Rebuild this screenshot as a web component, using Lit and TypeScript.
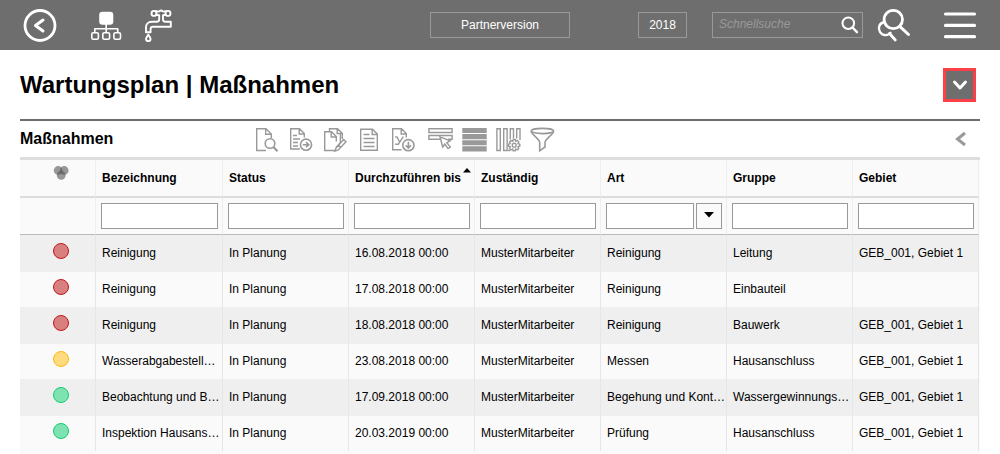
import { LitElement, html, svg, css } from "lit";
import { customElement } from "lit/decorators.js";

type Level = "red" | "yellow" | "green";

interface Measure {
  level: Level;
  cells: string[];
}

const COLUMNS = [
  "Bezeichnung",
  "Status",
  "Durchzuführen bis",
  "Zuständig",
  "Art",
  "Gruppe",
  "Gebiet",
];
const SORTED = "Durchzuführen bis";
const WITH_LIST = "Art";

const LEVEL_NAMES: Record<Level, string> = {
  red: "Rot",
  yellow: "Gelb",
  green: "Grün",
};

const ROWS: Measure[] = [
  { level: "red", cells: ["Reinigung", "In Planung", "16.08.2018 00:00", "MusterMitarbeiter", "Reinigung", "Leitung", "GEB_001, Gebiet 1"] },
  { level: "red", cells: ["Reinigung", "In Planung", "17.08.2018 00:00", "MusterMitarbeiter", "Reinigung", "Einbauteil", ""] },
  { level: "red", cells: ["Reinigung", "In Planung", "18.08.2018 00:00", "MusterMitarbeiter", "Reinigung", "Bauwerk", "GEB_001, Gebiet 1"] },
  { level: "yellow", cells: ["Wasserabgabestell…", "In Planung", "23.08.2018 00:00", "MusterMitarbeiter", "Messen", "Hausanschluss", "GEB_001, Gebiet 1"] },
  { level: "green", cells: ["Beobachtung und B…", "In Planung", "17.09.2018 00:00", "MusterMitarbeiter", "Begehung und Kont…", "Wassergewinnungs…", "GEB_001, Gebiet 1"] },
  { level: "green", cells: ["Inspektion Hausans…", "In Planung", "20.03.2019 00:00", "MusterMitarbeiter", "Prüfung", "Hausanschluss", "GEB_001, Gebiet 1"] },
];

const DOCUMENT_TOOLS = [
  {
    label: "Vorschau",
    art: svg`<path d="M12 23.5H2.7V1.7H12L17.3 7V11M11.7 2V7.3H17"/>
      <circle cx="16" cy="16.5" r="4.8" stroke-width="1.6"/><path d="M19.4 20L23.5 24.2" stroke-width="2.2"/>`,
  },
  {
    label: "Weiterleiten",
    art: svg`<path d="M12 22H2.7V1.7H11.5L16.3 6.5V10.5M11.2 2V7H16M5 8.5H9M5 12H12M5 15.5H10M5 19H10"/>
      <circle cx="18" cy="17.7" r="5.6" stroke-width="1.6"/><path d="M14.8 17.7H20M18 15.2L20.8 17.7L18 20.2" stroke-width="1.6"/>`,
  },
  {
    label: "Bearbeiten",
    art: svg`<path d="M7.5 4.5V1.7H15.5L20.3 6.3V12M15.2 2V6.5H20M13 23.5H2.7V4.7H9.5L14.3 9.5V14.5M9.2 5V10H14M14 21L21.6 12.6L24 14.8L16.3 23L12.8 24.2L14 21ZM16.5 18.2L19 20.5"/>
      <path d="M18.4 7V15.6L14 20.5" />`,
  },
  {
    label: "Liste",
    art: svg`<path d="M4.7 2.2H16.5L21.3 7V23.3H4.7ZM16.2 2.5V7.5H21M7.5 7.5H13.5M7.5 11.5H18.5M7.5 15.5H18.5M7.5 19.5H18.5"/>`,
  },
  {
    label: "Export",
    art: svg`<path d="M11.5 22.7H2.7V1.7H11.5L16.3 6.5V10.5M11.2 2V7H16M5.2 10H7L9.5 15M13.3 9.7L8.3 17.3H5.2"/>
      <circle cx="18.4" cy="18.2" r="5.6" stroke-width="1.6"/><path d="M18.4 14.8V20.6M15.8 18.3L18.4 21L21 18.3" stroke-width="1.6"/>`,
  },
];

const VIEW_TOOLS = [
  {
    label: "Auswahl",
    art: svg`<path d="M.9 1.7H24.1V5.5H.9ZM12.5 12.3H.9V8.5H24.1V12.3H20"/>
      <path d="M12 9.8L22.2 13.8L18.8 15.6L22.4 20L20 21.6L16.8 17L14.7 20Z" fill="#fff"/>`,
  },
  {
    label: "Zeilen",
    art: svg`<path d="M.3 1H24.7V6H.3ZM.3 7H24.7V12.2H.3ZM.3 13.2H24.7V18.2H.3ZM.3 19.2H24.7V24.6H.3Z" fill="#999" stroke="none"/>`,
  },
  {
    label: "Spalten",
    art: svg`<path d="M.9 1.7H4.3V23.5H.9ZM7.7 1.7H11.1V23.5H7.7ZM14.3 12.5V1.7H17.5V11.5M20.7 11.5V1.7H24V13M14.3 23.5H12"/>
      <path d="M17.3 12.5H19.3L19.7 14.2L21.4 13.4L22.8 15L22 16.6L23.8 17.3V19.2L22 19.7L22.7 21.5L21.3 22.8L19.7 22L19.2 23.9H17.2L16.7 22L15 22.8L13.5 21.4L14.3 19.7L12.5 19.2V17.2L14.3 16.6L13.5 15L15 13.5L16.7 14.2Z" fill="#fff"/><circle cx="18.2" cy="18.2" r="1.9"/>`,
  },
  {
    label: "Filter",
    art: svg`<ellipse cx="12.4" cy="4" rx="11.2" ry="2.6" stroke-width="1.6"/>
      <path d="M1.2 4.5C2 8 9.7 12 9.7 15.5V23.8L15 20V15.5C15 12 22.8 8 23.6 4.5" stroke-width="1.6"/>`,
  },
];

@customElement("app-header")
export class AppHeader extends LitElement {
  static styles = css`
    :host {
      display: block;
      background: #6e6e6e;
    }
    .bar {
      display: flex;
      align-items: center;
      justify-content: space-between;
      height: 50px;
      padding: 0 23px;
    }
    .group {
      display: flex;
      align-items: center;
    }
    button {
      font: 12px/14px "Liberation Sans", Arial, sans-serif;
      color: #fff;
      background: none;
      border: 0;
      padding: 0;
      cursor: pointer;
    }
    svg {
      display: block;
      fill: none;
      stroke: #fff;
      stroke-linecap: round;
      stroke-linejoin: round;
    }
    .tree {
      margin-left: 32px;
    }
    .tap {
      margin-left: 18px;
    }
    .framed {
      height: 26px;
      border: 1px solid #999;
      box-sizing: border-box;
    }
    .version {
      width: 140px;
    }
    .year {
      width: 49px;
      margin-left: 68px;
    }
    .search {
      display: flex;
      align-items: center;
      width: 151px;
      margin-left: 25px;
      padding-right: 2px;
    }
    .search input {
      flex: 1;
      min-width: 0;
      padding: 0 0 2px 6px;
      border: 0;
      outline: 0;
      background: none;
      color: #fff;
      font: italic 12px/14px "Liberation Sans", Arial, sans-serif;
    }
    .search input::placeholder {
      color: #999;
      opacity: 1;
    }
    .advanced {
      margin-left: 13px;
    }
    .menu {
      margin-left: 32px;
    }
  `;

  render() {
    return html`
      <header class="bar">
        <nav class="group">
          <button aria-label="Zurück">
            <svg width="34" height="34">
              <circle cx="17" cy="17.5" r="15" stroke-width="2.8" />
              <path d="M20 12L12.5 17.5L20 23" stroke-width="3" />
            </svg>
          </button>
          <button class="tree" aria-label="Struktur">
            <svg width="34" height="34" stroke-width="1.6">
              <rect x="11" y="4.5" width="12.5" height="11.5" rx="2.5" fill="#fff" />
              <path d="M17.2 16V24.5M5.8 24.5V20.7H28.7V24.5" />
              <rect x="2.8" y="24.7" width="6.6" height="6.6" rx="1.5" />
              <rect x="13.8" y="24.7" width="6.8" height="6.6" rx="1.5" />
              <rect x="24.9" y="24.7" width="6.6" height="6.6" rx="1.5" />
            </svg>
          </button>
          <button class="tap" aria-label="Wasser">
            <svg width="34" height="34" stroke-width="1.9">
              <circle cx="13" cy="5.4" r="2.5" />
              <circle cx="27" cy="5.4" r="2.5" />
              <path d="M14.8 3.2C17 3 17.5 4.2 18.4 3.4C19.4 2.4 20.8 2.4 21.8 3.4C22.7 4.2 23.2 3 25.2 3.2M15.2 6.8L18.2 7.2V11.6C18.2 13 17 13.8 15.6 13.8H11C7 13.8 5 16.2 5 19.2V24.3H9.6V21.2C9.6 19.6 10.5 18.8 12 18.8H29.8V13.8H24.4C23 13.8 22 13 22 11.6V7.2L24.8 6.8" />
              <path d="M7.3 26.6C6.2 28.6 5 29.8 5 31.1C5 32.5 6 33.2 7.3 33.2C8.6 33.2 9.6 32.5 9.6 31.1C9.6 29.8 8.4 28.6 7.3 26.6Z" />
            </svg>
          </button>
        </nav>
        <div class="group">
          <button class="framed version">Partnerversion</button>
          <button class="framed year">2018</button>
          <form class="framed search" role="search">
            <input type="text" placeholder="Schnellsuche" aria-label="Schnellsuche" />
            <button type="button" aria-label="Suchen">
              <svg width="20" height="20">
                <circle cx="8.3" cy="8.2" r="5.8" stroke-width="2" />
                <path d="M12.5 12.5L17 17.2" stroke-width="2.4" />
              </svg>
            </button>
          </form>
          <button class="advanced" aria-label="Erweiterte Suche">
            <svg width="35" height="34">
              <path d="M7 14.5C2.8 16 1.9 20.5 4 24C6.5 28 11.5 28 14.5 24.8" stroke-width="2.4" />
              <path d="M13.5 25.5L19.3 32" stroke-width="2.8" />
              <circle cx="17.3" cy="11.5" r="9.2" stroke-width="2.8" />
              <path d="M24 18.7L32.5 26.5" stroke-width="3" />
            </svg>
          </button>
          <button class="menu" aria-label="Menü">
            <svg width="34" height="34" stroke-width="3.2">
              <path d="M2.5 6H31.5M2.5 17.4H31.5M2.5 28.7H31.5" />
            </svg>
          </button>
        </div>
      </header>
    `;
  }
}

@customElement("measure-table")
export class MeasureTable extends LitElement {
  static styles = css`
    :host {
      display: block;
      flex: 1;
      border-top: 3px solid #ddd;
      background: #fafafa;
    }
    table {
      width: calc(100% - 1px);
      table-layout: fixed;
      border-collapse: separate;
      border-spacing: 0;
      font: 12px/14px "Liberation Sans", Arial, sans-serif;
      color: #000;
    }
    th,
    td {
      box-sizing: border-box;
      height: 36px;
      padding: 0 0 0 6px;
      border-right: 1px solid #e6e6e6;
      text-align: left;
      white-space: nowrap;
      overflow: hidden;
    }
    th {
      height: 38px;
      border-right-color: #eee;
      border-bottom: 2px solid #ddd;
    }
    .name {
      width: 127px;
    }
    .state {
      width: 76px;
      padding: 0 0 4px 6px;
      text-align: center;
    }
    th.state {
      padding-bottom: 10px;
    }
    .state svg {
      display: block;
      margin: 0 auto;
    }
    .title {
      display: flex;
      align-items: center;
      gap: 2px;
    }
    .arrow {
      align-self: flex-start;
      margin-top: -3px;
    }
    .filters td {
      height: 37px;
      padding: 0 4px 0 5px;
      border-right-color: #eee;
      border-bottom: 1px solid #bbb;
    }
    .filter {
      display: flex;
      gap: 2px;
    }
    .filter input {
      flex: 1;
      min-width: 0;
      box-sizing: border-box;
      height: 26px;
      padding: 0 5px;
      border: 1px solid #999;
      border-radius: 0;
      background: #fff;
      font: inherit;
    }
    .filter button {
      display: flex;
      align-items: center;
      justify-content: center;
      width: 26px;
      height: 26px;
      padding: 0 0 2px;
      border: 1px solid #999;
      background: #fafafa;
    }
    .row:nth-child(odd) td {
      background: #efefef;
    }
    .row:nth-child(even) td {
      border-top: 1px solid #efefef;
      padding-bottom: 1px;
    }
    .row:nth-child(even) .state {
      padding-bottom: 5px;
    }
    .dot {
      display: block;
      box-sizing: border-box;
      width: 16px;
      height: 16px;
      margin: 0 auto;
      border: 1px solid;
      border-radius: 50%;
    }
    .red {
      background: #da7f7f;
      border-color: #be1a1e;
    }
    .yellow {
      background: #ffdb80;
      border-color: #fdb813;
    }
    .green {
      background: #7fe3b1;
      border-color: #12cb70;
    }
  `;

  render() {
    return html`
      <table>
        <thead>
          <tr>
            <th class="state" aria-label="Ampel">
              <svg width="16" height="16" fill="#555" fill-opacity=".6">
                <circle cx="5.2" cy="5.5" r="4.4" />
                <circle cx="11.2" cy="5.5" r="4.4" />
                <circle cx="8.2" cy="10.4" r="4.4" />
              </svg>
            </th>
            ${COLUMNS.map(
              (name, i) => html`<th class=${i === 0 ? "name" : ""}>
                <div class="title">
                  ${name}
                  ${name === SORTED
                    ? html`<svg class="arrow" width="8" height="5"><path d="M4 0L8 4.5H0Z" /></svg>`
                    : ""}
                </div>
              </th>`
            )}
          </tr>
          <tr class="filters">
            <td></td>
            ${COLUMNS.map(
              (name) => html`<td>
                <div class="filter">
                  <input type="text" aria-label=${`Filter ${name}`} />
                  ${name === WITH_LIST
                    ? html`<button aria-label="Auswahl Art" aria-haspopup="listbox">
                        <svg width="10" height="6"><path d="M0 0H10L5 5.5Z" /></svg>
                      </button>`
                    : ""}
                </div>
              </td>`
            )}
          </tr>
        </thead>
        <tbody>
          ${ROWS.map(
            (row) => html`<tr class="row">
              <td class="state">
                <span class="dot ${row.level}" role="img" aria-label=${LEVEL_NAMES[row.level]}></span>
              </td>
              ${row.cells.map((cell) => html`<td>${cell}</td>`)}
            </tr>`
          )}
        </tbody>
      </table>
    `;
  }
}

@customElement("app-root")
export class AppRoot extends LitElement {
  static styles = css`
    :host {
      display: flex;
      flex-direction: column;
      min-height: 100vh;
      background: #fff;
      color: #000;
      font-family: "Liberation Sans", Arial, sans-serif;
    }
    main {
      flex: 1;
      display: flex;
      flex-direction: column;
      padding: 0 20px;
    }
    .heading {
      display: flex;
      align-items: center;
      justify-content: space-between;
      padding: 18px 4px 17px 0;
      border-bottom: 2px solid #6e6e6e;
    }
    h1 {
      margin: 0;
      font-size: 24px;
      line-height: 28px;
    }
    h2 {
      width: 234px;
      margin: 0;
      font-size: 16px;
      line-height: 18px;
    }
    button {
      padding: 0;
      border: 0;
      background: none;
      cursor: pointer;
    }
    svg {
      display: block;
      fill: none;
      stroke-linecap: round;
      stroke-linejoin: round;
    }
    .toggle {
      border: 3px solid #fb4147;
      background: #6e6e6e;
    }
    .toggle svg {
      stroke: #fff;
      stroke-width: 3;
    }
    .panel {
      display: flex;
      align-items: center;
      height: 36px;
    }
    .tools {
      display: flex;
      gap: 8px;
      padding-top: 2px;
    }
    .tools + .tools {
      margin-left: 12px;
    }
    .tools svg {
      stroke: #999;
      stroke-width: 1.4;
      stroke-linecap: butt;
      stroke-linejoin: miter;
    }
    .collapse {
      margin-left: auto;
      padding-right: 13px;
    }
    .collapse svg {
      stroke: #999;
      stroke-width: 3;
      stroke-linecap: butt;
      stroke-linejoin: miter;
    }
  `;

  private renderTools(tools: typeof VIEW_TOOLS) {
    return html`<div class="tools">
      ${tools.map(
        (tool) => html`<button aria-label=${tool.label}>
          <svg width="26" height="26">${tool.art}</svg>
        </button>`
      )}
    </div>`;
  }

  render() {
    return html`
      <app-header></app-header>
      <main>
        <div class="heading">
          <h1>Wartungsplan | Maßnahmen</h1>
          <button class="toggle" aria-label="Aufklappen">
            <svg width="27" height="28"><path d="M8.5 11L14 17L19.5 11" /></svg>
          </button>
        </div>
        <div class="panel">
          <h2>Maßnahmen</h2>
          ${this.renderTools(DOCUMENT_TOOLS)} ${this.renderTools(VIEW_TOOLS)}
          <button class="collapse" aria-label="Einklappen">
            <svg width="14" height="16"><path d="M12 2L4.5 8L12 14" /></svg>
          </button>
        </div>
        <measure-table></measure-table>
      </main>
    `;
  }
}
